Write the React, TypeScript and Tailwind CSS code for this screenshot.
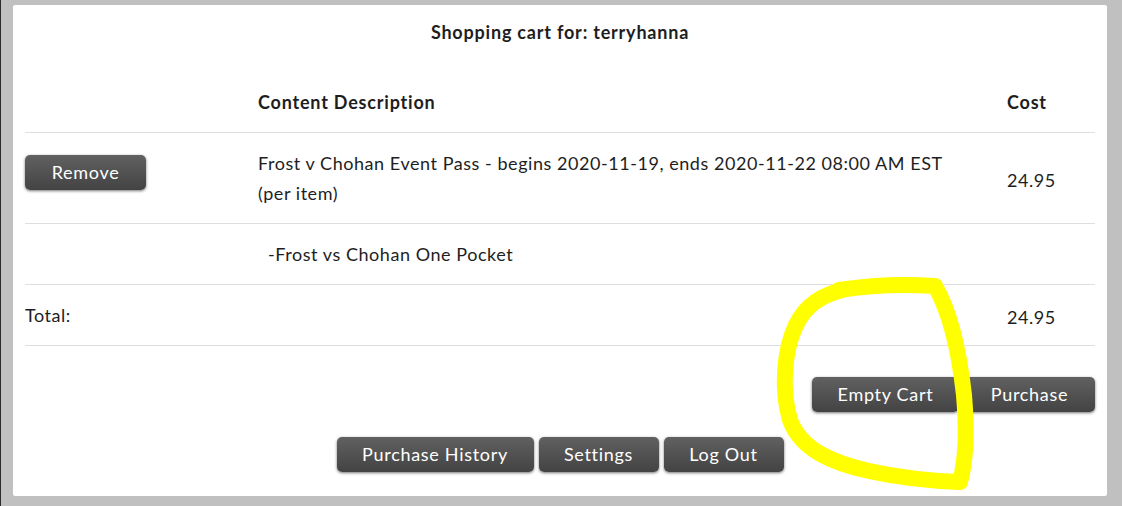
export default function App() {
  const font = { fontFamily: "Lato, 'Open Sans', sans-serif" };
  const btn =
    "h-[35px] rounded-[5px] bg-gradient-to-b from-[#616161] to-[#434343] text-white text-[18px] tracking-[0.7px] shadow-[0_1px_3px_rgba(0,0,0,0.55)] flex items-center justify-center";

  return (
    <div
      className="relative h-[506px] w-[1122px] bg-[#c0c0c0] border-l border-[#2b2b2b] pl-[12px] pr-[15px] pt-[5px] pb-[10px] text-[#1e1e1e] tracking-[0.55px]"
      style={font}
    >
      <div className="h-full bg-white rounded-[2px] px-[12px]">
        <div className="h-[54px] flex items-center justify-center text-[18px] font-bold tracking-[0.8px]">
          Shopping cart for: terryhanna
        </div>

        {/* header */}
        <div className="h-[73px] flex items-end pb-[18px] text-[18px] font-bold leading-6 tracking-[0.8px]">
          <div className="w-[221px]" />
          <div className="flex-1 px-3">Content Description</div>
          <div className="w-[100px] px-3">Cost</div>
        </div>

        {/* item row */}
        <div className="h-[91px] flex items-center border-t border-[#dedede] text-[18px]">
          <div className="w-[221px] flex items-center">
            <button className={btn + " w-[121px] mb-3"}>Remove</button>
          </div>
          <div className="flex-1 px-3 leading-[30px]">
            Frost v Chohan Event Pass - begins 2020-11-19, ends 2020-11-22 08:00 AM EST
            <br />
            (per item)
          </div>
          <div className="w-[100px] px-3 pt-1">24.95</div>
        </div>

        {/* sub item */}
        <div className="h-[61px] flex items-center border-t border-[#dedede] text-[18px]">
          <div className="w-[221px]" />
          <div className="flex-1 pl-[22px] pr-3">-Frost vs Chohan One Pocket</div>
          <div className="w-[100px]" />
        </div>

        {/* total */}
        <div className="h-[62px] flex items-center border-y border-[#dedede] text-[18px]">
          <div className="w-[221px]">Total:</div>
          <div className="flex-1" />
          <div className="w-[100px] px-3 pt-1">24.95</div>
        </div>

        <div className="flex justify-end gap-[5px] pt-[31px]">
          <button className={btn + " w-[147px]"}>Empty Cart</button>
          <button className={btn + " w-[131px]"}>Purchase</button>
        </div>

        <div className="flex justify-center gap-[5px] pt-[25px]">
          <button className={btn + " w-[197px]"}>Purchase History</button>
          <button className={btn + " w-[120px]"}>Settings</button>
          <button className={btn + " w-[120px]"}>Log Out</button>
        </div>
      </div>

      {/* hand-drawn highlight */}
      <svg
        className="absolute left-0 top-0 pointer-events-none"
        width="1122"
        height="506"
        viewBox="0 0 1122 506"
      >
        <path
          d="M838 290 C870 285 905 284 934 286 C948 310 958 350 963 395 C966 430 965 460 959 482 C930 481 900 478 868 471 C832 463 800 450 789 420 C780 390 783 350 795 325 C805 305 820 295 845 289"
          fill="none"
          stroke="#ffff00"
          strokeWidth="16"
          strokeLinecap="round"
          strokeLinejoin="round"
        />
      </svg>
    </div>
  );
}
